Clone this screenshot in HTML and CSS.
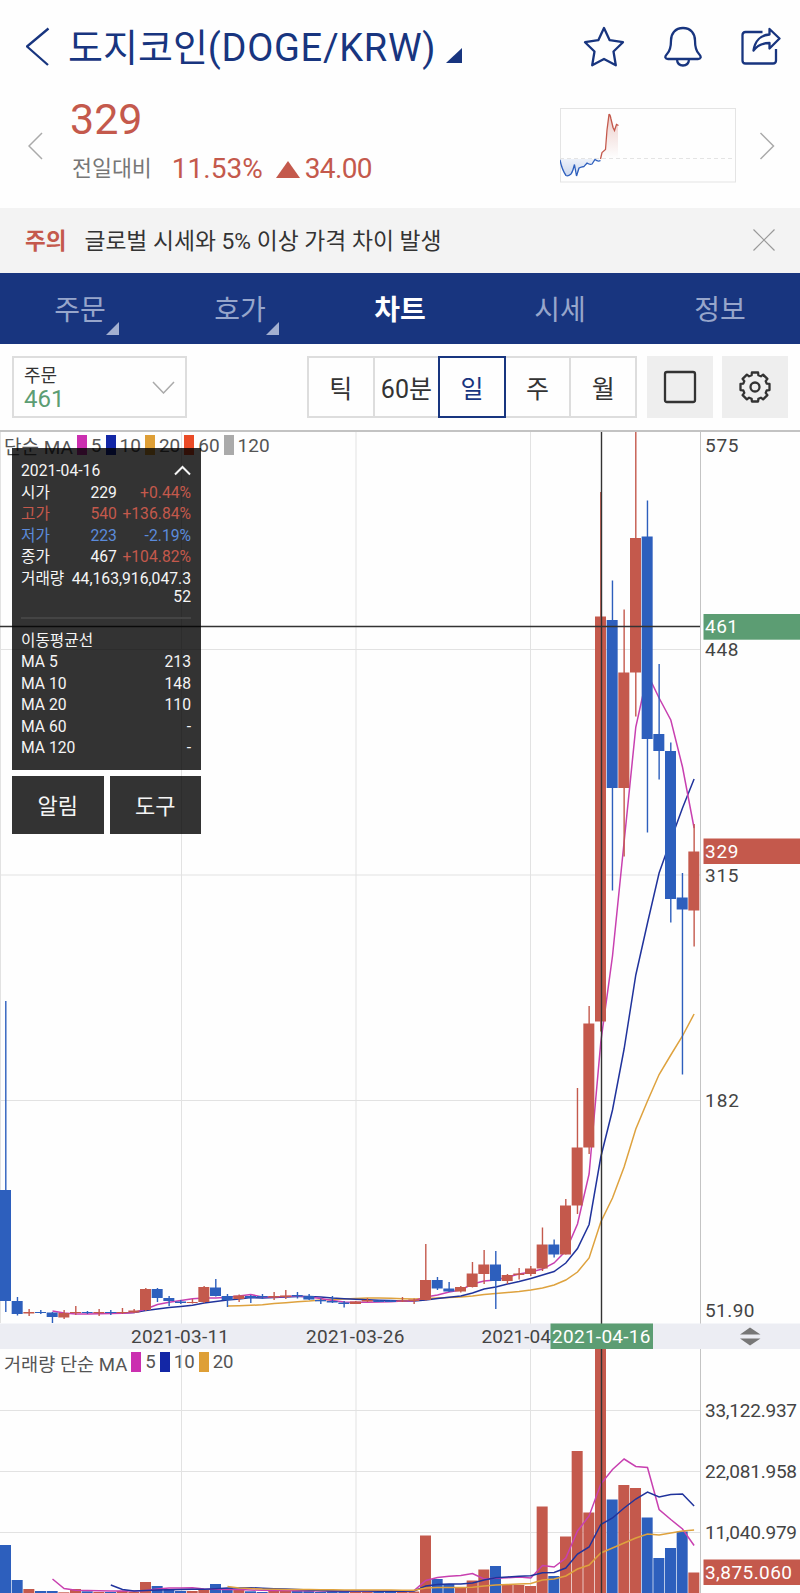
FILE: index.html
```
<!DOCTYPE html>
<html lang="ko">
<head>
    <meta charset="UTF-8">
    <meta name="viewport" content="width=device-width, initial-scale=1.0">
    <title>도지코인(DOGE/KRW)</title>
    <link rel="stylesheet" href="styles.css">
</head>
<body>
    <header class="header">
        <svg class="back" width="24" height="40" viewBox="0 0 24 40"><path d="M22.5 1.5L1 19.5L22 38"/></svg>
        <h1>도지코인<span>(DOGE/KRW)</span></h1>
        <svg class="title-arrow" width="16" height="15" viewBox="0 0 16 15"><path d="M0 15H16V0Z"/></svg>
        <div class="header-icons">
            <svg width="42" height="42" viewBox="0 0 42 42"><path d="M21 2L26.7 14.2L40 16.2L30.5 25.5L32.8 39.3L21 33L9.2 39.3L11.5 25.5L2 16.2L15.3 14.2Z"/></svg>
            <svg width="38" height="42" viewBox="0 0 38 42"><path d="M19 2C11 2 7 8 7 14.5C7 22 6 25 3 28C0 31 1.5 33 4 33H34C36.5 33 38 31 35 28C32 25 31 22 31 14.5C31 8 27 2 19 2Z"/><path d="M13 34C13.5 38 16 39.5 19 39.5C22 39.5 24.5 38 25 34"/></svg>
            <svg width="40" height="42" viewBox="0 0 40 42"><path d="M21.5 6H4.5Q1.5 6 1.5 9V34.5Q1.5 37.5 4.5 37.5H32Q35 37.5 35 34.5V23"/><path d="M28.5 3L38.5 12.5L28.5 22.5V17C20 17 16 20 12.5 24.5C14 15 20 9 28.5 8.5Z"/></svg>
        </div>
    </header>

    <section class="price">
        <svg class="move" width="16" height="28" viewBox="0 0 16 28"><path d="M14 1L1 14L14 27"/></svg>
        <div class="price-info">
            <div class="price-now">329</div>
            <div class="price-diff">
                <span class="diff-label">전일대비</span>
                <span class="diff-rate">11.53%</span>
                <svg width="24" height="17" viewBox="0 0 24 17"><path d="M12 0L24 17H0Z"/></svg>
                <span class="diff-value">34.00</span>
            </div>
        </div>
        <svg class="spark" width="176" height="75" viewBox="0 0 176 75">
            <defs>
                <linearGradient id="upFill" x1="0" y1="0" x2="0" y2="1"><stop offset="0" stop-color="#c4594c" stop-opacity=".3"/><stop offset="1" stop-color="#c4594c" stop-opacity="0"/></linearGradient>
                <linearGradient id="downFill" x1="0" y1="0" x2="0" y2="1"><stop offset="0" stop-color="#2d5fbd" stop-opacity=".08"/><stop offset="1" stop-color="#2d5fbd" stop-opacity=".25"/></linearGradient>
            </defs>
            <rect class="spark-box" x=".5" y=".5" width="175" height="73.5"/>
            <path class="spark-base" d="M0 50.5H176"/>
            <path fill="url(#downFill)" d="M0 51L2 59L5 66L8 68L12 65L15 56L17 68L20 59L26 57L30 56L36 52L41 51Z"/>
            <path fill="url(#upFill)" d="M41 50L43 44L46 41L48 14L50 6L52 14L55 22L57 16L58 17V50Z"/>
            <path class="spark-down" d="M0 52Q2 62 6 67.5Q8 68.5 11 66Q13 63 14.5 56.5L16.5 68L19 60Q21 59 24 58.5L27 55Q30 57 32 56L35 51.5Q38 54 40.5 52.5"/>
            <path class="spark-up" d="M40.5 51L42 44.5L45.5 41.5L47 22L49 6.5Q50 6 51 11L53 19.5L54.5 22.5L56.5 16.5L58.5 17.5"/>
        </svg>
        <svg class="move" width="16" height="28" viewBox="0 0 16 28"><path d="M1.5 1L14.5 14L1.5 27"/></svg>
    </section>

    <section class="notice">
        <strong>주의</strong>
        <span>글로벌 시세와 5% 이상 가격 차이 발생</span>
        <svg width="22" height="22" viewBox="0 0 22 22"><path d="M.5 .5L21.5 21.5M21.5 .5L.5 21.5"/></svg>
    </section>

    <nav class="tabs">
        <a class="tab has-menu">주문</a>
        <a class="tab has-menu">호가</a>
        <a class="tab active">차트</a>
        <a class="tab">시세</a>
        <a class="tab">정보</a>
    </nav>

    <section class="toolbar">
        <div class="order-select">
            <div>
                <div class="order-label">주문</div>
                <div class="order-price">461</div>
            </div>
            <svg width="23" height="13" viewBox="0 0 23 13"><path d="M1 1L11.5 12L22 1"/></svg>
        </div>
        <div class="periods">
            <button>틱</button>
            <button class="minute">60분</button>
            <button class="active">일</button>
            <button>주</button>
            <button>월</button>
        </div>
        <button class="tool">
            <svg width="34" height="34" viewBox="0 0 34 34"><rect x="2" y="2" width="30" height="30" rx="2"/></svg>
        </button>
        <button class="tool">
            <svg id="gear" width="34" height="34" viewBox="-17 -17 34 34"><circle r="4.5"/></svg>
        </button>
    </section>

    <main class="chart">
        <svg id="chart" width="800" height="1161" viewBox="0 432 800 1161"></svg>

        <div class="legend">
            <span>단순 MA</span>
            <i class="ma5"></i><span>5</span>
            <i class="ma10"></i><span>10</span>
            <i class="ma20"></i><span>20</span>
            <i class="ma60"></i><span>60</span>
            <i class="ma120"></i><span>120</span>
        </div>
        <div class="legend legend-volume">
            <span>거래량 단순 MA</span>
            <i class="ma5"></i><span>5</span>
            <i class="ma10"></i><span>10</span>
            <i class="ma20"></i><span>20</span>
        </div>

        <div class="overlay">
            <div class="info">
                <div class="row">
                    <span>2021-04-16</span>
                    <svg width="17" height="11" viewBox="0 0 17 11"><path d="M1 9.5L8.5 2L16 9.5"/></svg>
                </div>
                <div class="row"><span>시가</span><b>229</b><em class="up">+0.44%</em></div>
                <div class="row up"><span>고가</span><b>540</b><em>+136.84%</em></div>
                <div class="row down"><span>저가</span><b>223</b><em>-2.19%</em></div>
                <div class="row"><span>종가</span><b>467</b><em class="up">+104.82%</em></div>
                <div class="row volume"><span>거래량</span><p>44,163,916,047.3<br>52</p></div>
                <hr>
                <div class="row"><span>이동평균선</span></div>
                <div class="row"><span>MA 5</span><span>213</span></div>
                <div class="row"><span>MA 10</span><span>148</span></div>
                <div class="row"><span>MA 20</span><span>110</span></div>
                <div class="row"><span>MA 60</span><span>-</span></div>
                <div class="row"><span>MA 120</span><span>-</span></div>
            </div>
            <div class="overlay-buttons">
                <button>알림</button>
                <button>도구</button>
            </div>
        </div>
    </main>

    <script>
        const NS = 'http://www.w3.org/2000/svg';
        const chart = document.getElementById('chart');
        const STEP = 700 / 60;

        // [방향, 고가, 몸통 위, 몸통 아래, 저가, 거래량]
        const candles = [
            ['d',1001,1190,1301,1312,1545], ['d',1297,1301,1314,1315.5,1580], ['u',1309,1312,1313.5,1316,1589],
            ['d',1310,1312,1313,1314,1591], ['d',1312,1312.5,1317,1323,1591], ['u',1310,1313,1317.5,1319,1592.3],
            ['u',1306,1312,1313,1315,1589], ['d',1311,1312,1313,1314,1591.3], ['u',1309,1312,1313.2,1316,1592],
            ['d',1310,1312,1313,1315,1592], ['u',1308,1312,1313,1314,1591], ['u',1309,1310.5,1312.5,1313,1592],
            ['u',1288,1289,1310,1311,1582], ['d',1288,1289,1298,1302,1586], ['d',1296,1298,1301,1306,1589],
            ['d',1300,1301.5,1303,1304,1591], ['u',1299,1302,1303,1303.5,1591], ['u',1286,1287,1302,1303,1590],
            ['d',1279,1287.5,1296,1296.5,1584], ['d',1294,1296,1300,1307,1588], ['u',1294.5,1295.5,1299,1302,1590],
            ['d',1295,1296,1298,1303,1591.3], ['d',1294,1296,1297.3,1299,1592], ['u',1292,1296,1297.5,1300,1591],
            ['u',1290,1295.5,1297,1299,1590.5], ['d',1292,1295,1296.5,1298.5,1591], ['d',1294,1296,1299.5,1300,1591],
            ['d',1298.5,1300,1301.3,1304,1592], ['d',1296,1301,1302.5,1303,1591], ['d',1301,1302.5,1304,1307.5,1591],
            ['u',1301,1301.5,1304,1304,1592], ['u',1298,1300,1301.5,1302,1592], ['d',1300,1300.5,1302,1302,1592],
            ['d',1300,1300.5,1302,1302,1592], ['u',1297,1300.5,1301.5,1302,1592], ['u',1298.5,1299.5,1301,1304,1591.5],
            ['u',1244,1280,1300,1300.5,1535.5], ['d',1277,1280,1288.5,1290,1579], ['d',1282,1288.5,1291.5,1292,1584],
            ['u',1286,1287,1291.5,1292.5,1588], ['u',1262,1273.5,1287,1287.5,1580.5], ['u',1250,1264.5,1274,1284,1569.5],
            ['d',1251,1264.5,1281,1309,1566], ['u',1274,1275,1281,1284,1585], ['u',1268,1273.5,1275,1279.5,1585],
            ['u',1266,1268.5,1274,1276,1586], ['u',1227.5,1244.5,1268.5,1271,1506.5], ['d',1239.5,1244.5,1254.5,1257.5,1576],
            ['u',1199,1205.5,1254.5,1254.5,1536.5], ['u',1088,1147.5,1205.5,1214,1451], ['u',1006,1023.5,1147.5,1154,1512.5],
            ['u',492,616.5,1021.5,1031.5,1340], ['d',580.5,620,788,890.5,1499.5], ['u',609.5,672.5,788,856.5,1485],
            ['u',420,538,672.5,716.5,1488], ['d',500.5,536.5,739,832.5,1517.5], ['d',664,734,751,779.5,1558],
            ['d',742.5,751,899,922.5,1548], ['d',873,897.5,909.5,1074.5,1531.5], ['u',824,851.5,910.5,946.5,1572.5]
        ];

        // 이동평균선: 첫 캔들 번호와 y 값
        const priceLines = [
            ['ma20', 19, [1306,1305.7,1305.3,1304.7,1303.5,1302.7,1301.7,1301,1300,1299.5,1299,1298.5,1298,1298,1298.2,1298.7,1299,1298.5,1298,1297.5,1297,1296,1294.5,1293.5,1292.5,1291.5,1290,1288,1285,1280,1272,1258,1222,1198,1167,1129,1101,1074.5,1055,1036,1014]],
            ['ma10', 9, [1313,1313,1312.5,1310.5,1309,1307.5,1306.5,1305.3,1303,1301.5,1300,1299,1297.5,1298,1297.5,1297,1296.5,1296.5,1297,1298,1298.7,1299.3,1299.8,1300.2,1300.6,1301,1301,1300,1298.5,1297.3,1296,1293,1289,1287,1284,1281.5,1278.5,1275,1271.5,1263,1248.5,1224.5,1157,1110,1049,975,923,873,840,808,779]],
            ['ma5', 4, [1311,1313,1314,1314,1313.7,1313.4,1313.3,1312.5,1309,1304.5,1302.3,1300.5,1298.7,1298,1298,1297.2,1296,1294.5,1297,1297,1296.5,1296,1297,1298.5,1300.5,1302,1302.3,1302.3,1302,1301.7,1301,1300.7,1297,1295,1292,1290,1284,1281,1280,1277,1274,1272,1269,1263,1251,1224,1174,1042,956,842,727,674,698,720,767,828]]
        ];
        const volumeLines = [
            ['ma5', 4, [1579,1588.5,1590.3,1590.6,1590.8,1591,1591,1591,1590.5,1589,1588,1588,1587.8,1589,1589.3,1589.5,1589.5,1590,1590.3,1590.5,1590.5,1590.7,1590.7,1591,1591,1591,1591,1591,1591,1591,1591,1590.5,1580.5,1577.5,1576.3,1575.5,1573.5,1579,1578.3,1577.7,1577,1578,1565.5,1567,1558,1531,1516,1484,1469.5,1459,1466.5,1467.5,1509.5,1519.5,1529,1545.5]],
            ['ma10', 9, [1585,1589.5,1591,1590.5,1590,1589.7,1589.5,1589.3,1589.2,1588.7,1588,1588,1587.7,1588.3,1588.7,1589,1589.5,1590,1590.5,1591,1591,1591,1591,1591.3,1591.3,1591.3,1591,1586,1584.5,1584,1584,1583,1580,1577.7,1577,1576.3,1575.7,1572.7,1572.5,1568,1554,1547,1524.5,1518,1508,1499,1492,1497,1494.5,1494,1506]],
            ['ma20', 19, [1586.5,1588,1588.5,1589,1589.2,1589.5,1589.5,1589.5,1589.7,1589.7,1590,1590,1590,1590,1590,1590.3,1590.3,1588,1587.5,1587.5,1587.5,1587.2,1586,1585,1584.5,1584,1583.5,1580,1579,1576,1569,1565,1553,1548,1543,1538,1534,1535,1533,1531,1530]]
        ];

        function add(tag, attrs, text) {
            const el = document.createElementNS(NS, tag);
            for (const key in attrs) el.setAttribute(key, attrs[key]);
            if (text) el.textContent = text;
            chart.appendChild(el);
        }

        function line(x1, y1, x2, y2, cls) {
            add('line', { x1, y1, x2, y2, class: cls });
        }

        function box(x, y, width, height, cls) {
            add('rect', { x, y, width, height, class: cls });
        }

        function label(x, y, width, text, cls) {
            add('text', { x, y, textLength: width, class: cls || 'axis-text' }, text);
        }

        function drawLines(lines) {
            lines.forEach(([cls, start, ys]) => {
                const points = ys.map((y, i) => ((start + i) * STEP + 5.8).toFixed(1) + ',' + y).join(' ');
                add('polyline', { points, class: 'line-' + cls });
            });
        }

        // 눈금선
        [181.5, 356, 530.5].forEach(x => line(x, 432, x, 1593, 'grid'));
        [649.5, 875, 1100.5, 1410.5, 1471.5, 1532.5].forEach(y => line(0, y, 700, y, 'grid'));
        line(.5, 432, .5, 1323, 'grid');
        line(700.5, 432, 700.5, 1593, 'axis');

        // 거래량
        candles.forEach((c, i) => box(i * STEP, c[5], 11, 1593 - c[5], c[0]));
        drawLines(volumeLines);

        // 캔들
        drawLines(priceLines);
        candles.forEach((c, i) => {
            box(i * STEP + 5.1, c[1], 1.4, c[4] - c[1], c[0]);
            box(i * STEP, c[2], 11, c[3] - c[2], c[0]);
        });

        line(0, 626.5, 700, 626.5, 'cross');

        // 날짜 축
        box(0, 1323.5, 800, 25.5, 'date-bar');
        line(601.5, 432, 601.5, 1593, 'cross');
        label(131, 1343, 98, '2021-03-11');
        label(306, 1343, 98.5, '2021-03-26');
        label(481.5, 1343, 69.5, '2021-04');
        box(550.5, 1323.5, 102.5, 25.5, 'tag-green');
        label(552, 1343, 98.5, '2021-04-16', 'tag-text');
        add('path', { d: 'M740 1334.5L750 1327.5L760.5 1334.5ZM740 1338.5L750 1345.5L760.5 1338.5Z', class: 'handle' });

        // 가격 축
        label(705, 451.7, 33.5, '575');
        label(705, 656, 33.5, '448');
        label(705, 882, 33.5, '315');
        label(705, 1107, 34, '182');
        label(705, 1317, 49.5, '51.90');
        label(705, 1417, 92, '33,122.937');
        label(705, 1478, 92, '22,081.958');
        label(705, 1539.3, 92, '11,040.979');
        box(703.5, 614, 97, 25.7, 'tag-green');
        label(705, 633, 33, '461', 'tag-text');
        box(703.5, 838.5, 97, 25.5, 'u');
        label(705, 858, 33.5, '329', 'tag-text');
        box(703.5, 1559.5, 97, 25.5, 'u');
        label(705, 1579, 87, '3,875.060', 'tag-text');

        // 설정 아이콘 톱니
        const teeth = [];
        for (let i = 0; i < 8; i++) {
            [[-16, 12.2], [-12, 14.8], [12, 14.8], [16, 12.2]].forEach(([deg, r]) => {
                const a = (i * 45 + deg) * Math.PI / 180;
                teeth.push((Math.sin(a) * r).toFixed(1) + ',' + (-Math.cos(a) * r).toFixed(1));
            });
        }
        const gear = document.createElementNS(NS, 'polygon');
        gear.setAttribute('points', teeth.join(' '));
        document.getElementById('gear').appendChild(gear);
    </script>
</body>
</html>
```
FILE: styles.css
```
* {
    box-sizing: border-box;
}
body {
    margin: 0;
    width: 800px;
    font-family: Roboto, "Noto Sans CJK KR", sans-serif;
    background: #fefefe;
    color: #333;
}
button {
    font-family: inherit;
    padding: 0;
    border: none;
    border-radius: 0;
}
svg {
    display: block;
    flex: none;
    fill: none;
}
.header {
    display: flex;
    align-items: center;
    height: 95px;
    padding: 0 19px 2px 26px;
    color: #18357f;
}
.header svg {
    stroke: #18357f;
    stroke-width: 2.3;
    stroke-linejoin: round;
}
.header h1 {
    margin: 2px 0 0 18px;
    font-size: 38px;
    font-weight: 400;
    line-height: 50px;
    white-space: nowrap;
}
.header h1 span {
    letter-spacing: 0.7px;
}
.header .title-arrow {
    margin: 18px 0 0 10px;
    fill: #18357f;
    stroke: none;
}
.header-icons {
    display: flex;
    gap: 39px;
    margin-left: auto;
}
.price {
    display: flex;
    height: 113px;
    padding: 0 25px 0 28px;
}
.price .move {
    margin-top: 37px;
    stroke: #aaa;
    stroke-width: 1.5;
}
.price-info {
    margin-left: 26px;
    color: #c4594c;
}
.price-now {
    height: 50px;
    font-size: 43px;
    line-height: 48px;
}
.price-diff {
    display: flex;
    align-items: center;
    height: 46px;
    font-size: 28px;
}
.price-diff svg {
    margin: 2px 5px 0 13px;
    fill: #c4594c;
}
.diff-label {
    margin: -4px 20px 0 2px;
    font-size: 21.7px;
    color: #777;
}
.diff-value {
    letter-spacing: -0.6px;
}
.spark {
    margin: 13px 23px 0 auto;
}
.spark-box {
    stroke: #e4e4e4;
}
.spark-base {
    stroke: #e4e4e4;
    stroke-dasharray: 4 3;
}
.spark-down {
    stroke: #2d5fbd;
    stroke-width: 1.3;
}
.spark-up {
    stroke: #c4594c;
    stroke-width: 1.3;
}
.notice {
    display: flex;
    align-items: center;
    height: 65px;
    padding: 0 25px 3px;
    font-size: 22.8px;
    background: #f3f3f3;
}
.notice strong {
    margin-right: 18px;
    font-size: 22.5px;
    color: #c4594c;
}
.notice svg {
    margin: 1px 0 0 auto;
    stroke: #999;
    stroke-width: 1.2;
}
.tabs {
    display: flex;
    height: 71px;
    background: #18357f;
}
.tab {
    position: relative;
    width: 160px;
    line-height: 76px;
    font-size: 28px;
    text-align: center;
    color: #97a6cb;
}
.tab.active {
    color: #fff;
    font-weight: 700;
}
.has-menu::after {
    content: "";
    position: absolute;
    right: 41px;
    top: 49px;
    border-left: 13px solid transparent;
    border-bottom: 13px solid #a3b0d0;
}
.toolbar {
    display: flex;
    height: 86px;
    padding: 12px 12px 0;
}
.order-select {
    display: flex;
    align-items: center;
    justify-content: space-between;
    width: 175px;
    height: 62px;
    margin-right: 120px;
    padding: 0 10px;
    border: 2px solid #ddd;
}
.order-select svg {
    stroke: #aaa;
    stroke-width: 1.5;
}
.order-label {
    padding-top: 2px;
    font-size: 18px;
    line-height: 22px;
}
.order-price {
    font-size: 24px;
    line-height: 25px;
    color: #5c9d73;
}
.periods {
    display: flex;
    width: 330px;
    margin-right: 10px;
}
.periods button {
    flex: 1;
    height: 62px;
    margin-left: -2px;
    border: 2px solid #ddd;
    background: #fefefe;
    font-size: 25px;
    color: #333;
}
.periods button:first-child {
    margin-left: 0;
}
.periods .minute {
    font-size: 25px;
    white-space: nowrap;
}
.periods .active {
    position: relative;
    border-color: #18357f;
    color: #18357f;
}
.tool {
    display: flex;
    align-items: center;
    justify-content: center;
    width: 66px;
    height: 62px;
    margin-right: 9px;
    background: #eee;
}
.tool:last-child {
    margin-right: 0;
}
.tool svg {
    stroke: #333;
    stroke-width: 2.3;
    stroke-linejoin: round;
}
.chart {
    position: relative;
    border-top: 2px solid #c3c3c3;
}
.legend {
    position: absolute;
    top: 2px;
    left: 4px;
    display: flex;
    align-items: center;
    height: 22px;
    font-size: 19px;
    color: #555;
    white-space: nowrap;
}
.legend-volume {
    top: 919px;
    font-size: 18.6px;
}
.legend i {
    width: 10px;
    height: 20px;
    margin: 0 4px;
}
.ma5 {
    background: #cb2fb0;
}
.ma10 {
    background: #1327a6;
}
.ma20 {
    background: #de9f36;
}
.ma60 {
    background: #ea4b27;
}
.ma120 {
    background: #aaa;
}
.overlay {
    position: absolute;
    top: 16px;
    left: 12px;
    width: 189px;
}
.info {
    height: 322px;
    padding: 12px 10px 0 9px;
    font-size: 15.7px;
    color: #f5f5f5;
    background: rgba(0, 0, 0, 0.8);
}
.row {
    display: flex;
    justify-content: space-between;
    align-items: center;
    height: 21.5px;
    line-height: 21.5px;
    white-space: nowrap;
}
.row b {
    width: 68px;
    text-align: right;
    font-weight: 400;
}
.row em {
    width: 75px;
    text-align: right;
    font-style: normal;
}
.row span:first-child {
    min-width: 27px;
}
.row svg {
    stroke: #f5f5f5;
    stroke-width: 2;
}
.row.volume {
    align-items: flex-start;
    height: 48px;
}
.row p {
    margin: 2px 0 0;
    line-height: 18px;
    text-align: right;
}
.info hr {
    height: 2px;
    margin: 1px 0 11px;
    border: none;
    background: #444;
}
.up {
    color: #c4594c;
}
.down {
    color: #5b8bdc;
}
.overlay-buttons {
    display: flex;
    gap: 6px;
    margin-top: 6px;
}
.overlay-buttons button {
    flex: 1;
    height: 58px;
    padding-bottom: 2px;
    font-size: 22px;
    color: #f5f5f5;
    background: rgba(0, 0, 0, 0.8);
}
.grid {
    stroke: #e2e2e2;
}
.axis {
    stroke: #c4c4c4;
}
.cross {
    stroke: #333;
    stroke-width: 1.4;
}
.u {
    fill: #c4594c;
}
.d {
    fill: #2d5fbd;
}
.line-ma5,
.line-ma10,
.line-ma20 {
    stroke-width: 1.5;
}
.line-ma5 {
    stroke: #c840b0;
}
.line-ma10 {
    stroke: #20339c;
}
.line-ma20 {
    stroke: #dea23e;
}
.date-bar {
    fill: #ecedf3;
}
.tag-green {
    fill: #5c9d73;
}
.handle {
    fill: #777;
}
.axis-text,
.tag-text {
    font-size: 19px;
    fill: #444;
}
.tag-text {
    fill: #fff;
}
```
